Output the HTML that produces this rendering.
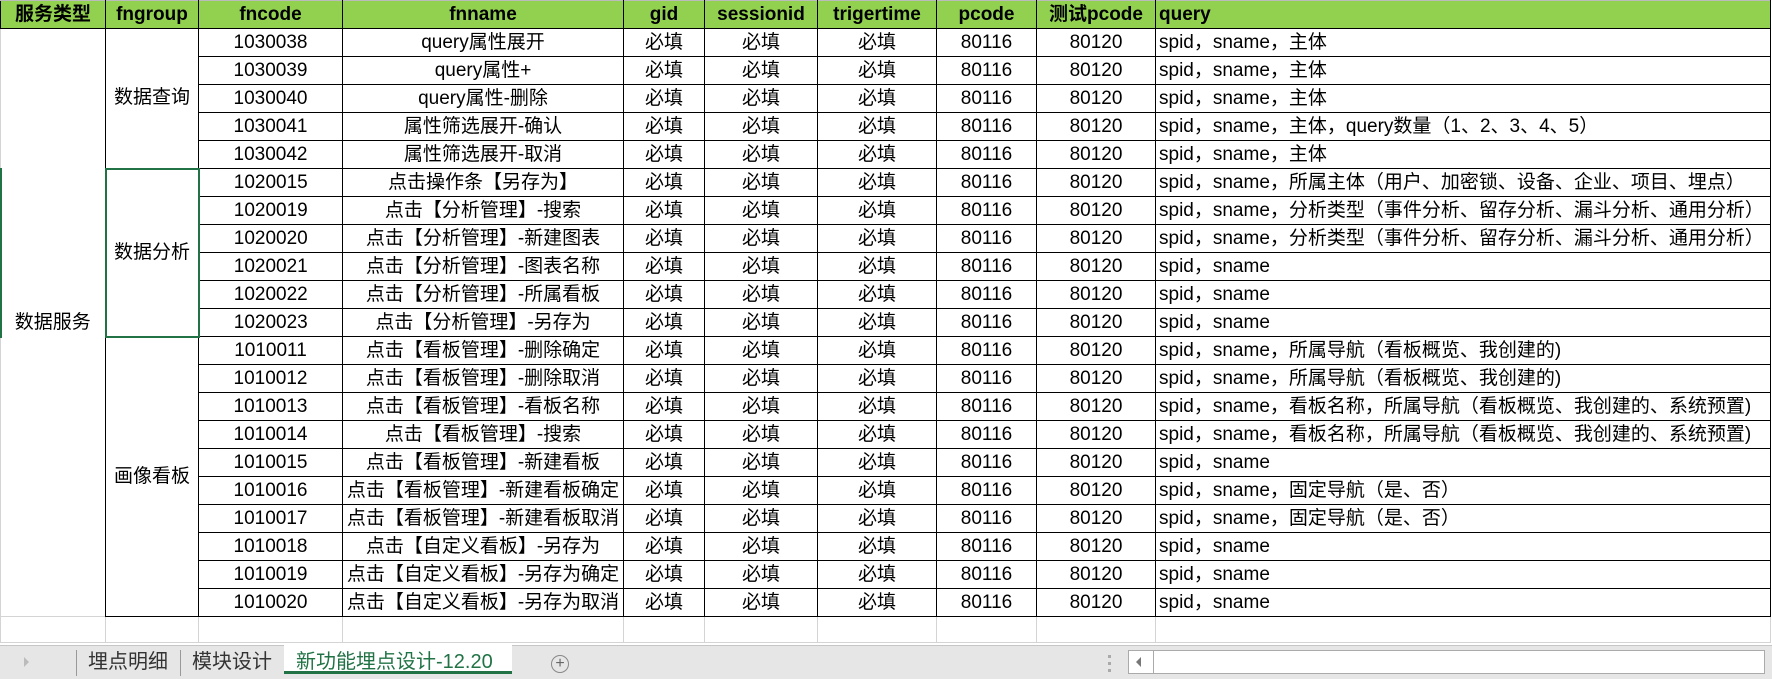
<!DOCTYPE html>
<html><head><meta charset="utf-8"><style>
*{margin:0;padding:0;box-sizing:border-box}
body{width:1772px;height:679px;overflow:hidden;background:#fff;font-family:"Liberation Sans","Noto Sans CJK SC",sans-serif;font-size:19px;color:#000;position:relative}
table{position:absolute;left:0;top:0;border-collapse:collapse;table-layout:fixed;width:1771px}
td{height:28px;border:1px solid #000;text-align:center;white-space:nowrap;overflow:hidden;padding:0;line-height:26px}
tr.h td{background:#92d050;font-weight:bold;height:28px;border-top:1px solid #bbb}
td.q{text-align:left;padding-left:3px}
td.s{border-top:none;border-bottom:none;border-left:1px solid #d4d4d4}
tr.b td{border:1px solid #d4d4d4;height:26px}
.tabs{position:absolute;left:0;top:645px;width:1772px;height:34px;background:#e6e6e6;border-top:1px solid #c6c6c6}
.t{position:absolute;top:3px;font-size:20px;color:#333;line-height:26px}
</style></head><body>
<table>
<colgroup><col style="width:105px"><col style="width:93px"><col style="width:144px"><col style="width:281px"><col style="width:81px"><col style="width:113px"><col style="width:119px"><col style="width:100px"><col style="width:119px"><col></colgroup>
<tr class="h"><td>服务类型</td><td>fngroup</td><td>fncode</td><td>fnname</td><td>gid</td><td>sessionid</td><td>trigertime</td><td>pcode</td><td>测试pcode</td><td class="q">query</td></tr>
<tr><td class="s" rowspan="21" style="border-left:1px solid #d4d4d4">数据服务</td><td rowspan="5">数据查询</td><td>1030038</td><td>query属性展开</td><td>必填</td><td>必填</td><td>必填</td><td>80116</td><td>80120</td><td class="q">spid，sname，主体</td></tr>
<tr><td>1030039</td><td>query属性+</td><td>必填</td><td>必填</td><td>必填</td><td>80116</td><td>80120</td><td class="q">spid，sname，主体</td></tr>
<tr><td>1030040</td><td>query属性-删除</td><td>必填</td><td>必填</td><td>必填</td><td>80116</td><td>80120</td><td class="q">spid，sname，主体</td></tr>
<tr><td>1030041</td><td>属性筛选展开-确认</td><td>必填</td><td>必填</td><td>必填</td><td>80116</td><td>80120</td><td class="q">spid，sname，主体，query数量（1、2、3、4、5）</td></tr>
<tr><td>1030042</td><td>属性筛选展开-取消</td><td>必填</td><td>必填</td><td>必填</td><td>80116</td><td>80120</td><td class="q">spid，sname，主体</td></tr>
<tr><td rowspan="6" style="border:2px solid #217346">数据分析</td><td>1020015</td><td>点击操作条【另存为】</td><td>必填</td><td>必填</td><td>必填</td><td>80116</td><td>80120</td><td class="q">spid，sname，所属主体（用户、加密锁、设备、企业、项目、埋点）</td></tr>
<tr><td>1020019</td><td>点击【分析管理】-搜索</td><td>必填</td><td>必填</td><td>必填</td><td>80116</td><td>80120</td><td class="q">spid，sname，分析类型（事件分析、留存分析、漏斗分析、通用分析）</td></tr>
<tr><td>1020020</td><td>点击【分析管理】-新建图表</td><td>必填</td><td>必填</td><td>必填</td><td>80116</td><td>80120</td><td class="q">spid，sname，分析类型（事件分析、留存分析、漏斗分析、通用分析）</td></tr>
<tr><td>1020021</td><td>点击【分析管理】-图表名称</td><td>必填</td><td>必填</td><td>必填</td><td>80116</td><td>80120</td><td class="q">spid，sname</td></tr>
<tr><td>1020022</td><td>点击【分析管理】-所属看板</td><td>必填</td><td>必填</td><td>必填</td><td>80116</td><td>80120</td><td class="q">spid，sname</td></tr>
<tr><td>1020023</td><td>点击【分析管理】-另存为</td><td>必填</td><td>必填</td><td>必填</td><td>80116</td><td>80120</td><td class="q">spid，sname</td></tr>
<tr><td rowspan="10">画像看板</td><td>1010011</td><td>点击【看板管理】-删除确定</td><td>必填</td><td>必填</td><td>必填</td><td>80116</td><td>80120</td><td class="q">spid，sname，所属导航（看板概览、我创建的)</td></tr>
<tr><td>1010012</td><td>点击【看板管理】-删除取消</td><td>必填</td><td>必填</td><td>必填</td><td>80116</td><td>80120</td><td class="q">spid，sname，所属导航（看板概览、我创建的)</td></tr>
<tr><td>1010013</td><td>点击【看板管理】-看板名称</td><td>必填</td><td>必填</td><td>必填</td><td>80116</td><td>80120</td><td class="q">spid，sname，看板名称，所属导航（看板概览、我创建的、系统预置)</td></tr>
<tr><td>1010014</td><td>点击【看板管理】-搜索</td><td>必填</td><td>必填</td><td>必填</td><td>80116</td><td>80120</td><td class="q">spid，sname，看板名称，所属导航（看板概览、我创建的、系统预置)</td></tr>
<tr><td>1010015</td><td>点击【看板管理】-新建看板</td><td>必填</td><td>必填</td><td>必填</td><td>80116</td><td>80120</td><td class="q">spid，sname</td></tr>
<tr><td>1010016</td><td>点击【看板管理】-新建看板确定</td><td>必填</td><td>必填</td><td>必填</td><td>80116</td><td>80120</td><td class="q">spid，sname，固定导航（是、否）</td></tr>
<tr><td>1010017</td><td>点击【看板管理】-新建看板取消</td><td>必填</td><td>必填</td><td>必填</td><td>80116</td><td>80120</td><td class="q">spid，sname，固定导航（是、否）</td></tr>
<tr><td>1010018</td><td>点击【自定义看板】-另存为</td><td>必填</td><td>必填</td><td>必填</td><td>80116</td><td>80120</td><td class="q">spid，sname</td></tr>
<tr><td>1010019</td><td>点击【自定义看板】-另存为确定</td><td>必填</td><td>必填</td><td>必填</td><td>80116</td><td>80120</td><td class="q">spid，sname</td></tr>
<tr><td>1010020</td><td>点击【自定义看板】-另存为取消</td><td>必填</td><td>必填</td><td>必填</td><td>80116</td><td>80120</td><td class="q">spid，sname</td></tr>
<tr class="b"><td></td><td></td><td></td><td></td><td></td><td></td><td></td><td></td><td></td><td></td></tr>
</table>
<div style="position:absolute;left:0;top:168px;width:2px;height:170px;background:#217346"></div>
<div class="tabs">
<div style="position:absolute;left:24px;top:11px;width:0;height:0;border-left:5px solid #bbb;border-top:5px solid transparent;border-bottom:5px solid transparent"></div>
<div style="position:absolute;left:76px;top:4px;width:1px;height:26px;background:#999"></div>
<div class="t" style="left:88px">埋点明细</div>
<div style="position:absolute;left:180px;top:4px;width:1px;height:26px;background:#999"></div>
<div class="t" style="left:192px">模块设计</div>
<div style="position:absolute;left:284px;top:-1px;width:228px;height:29px;background:#fff;border-bottom:3px solid #217346"></div>
<div class="t" style="left:296px;color:#217346">新功能埋点设计-12.20</div>
<div style="position:absolute;left:551px;top:9px;width:18px;height:18px;border:1px solid #888;border-radius:50%;text-align:center;line-height:15px;font-size:16px;color:#666">+</div>
<div style="position:absolute;left:1108px;top:9px;width:3px;height:17px;border-left:3px dotted #aaa"></div>
<div style="position:absolute;left:1128px;top:4px;width:637px;height:24px;background:#fff;border:1px solid #aaa"></div>
<div style="position:absolute;left:1153px;top:4px;width:1px;height:24px;background:#aaa"></div>
<div style="position:absolute;left:1136px;top:11px;width:0;height:0;border-right:5px solid #777;border-top:5px solid transparent;border-bottom:5px solid transparent"></div>
</div>
</body></html>
